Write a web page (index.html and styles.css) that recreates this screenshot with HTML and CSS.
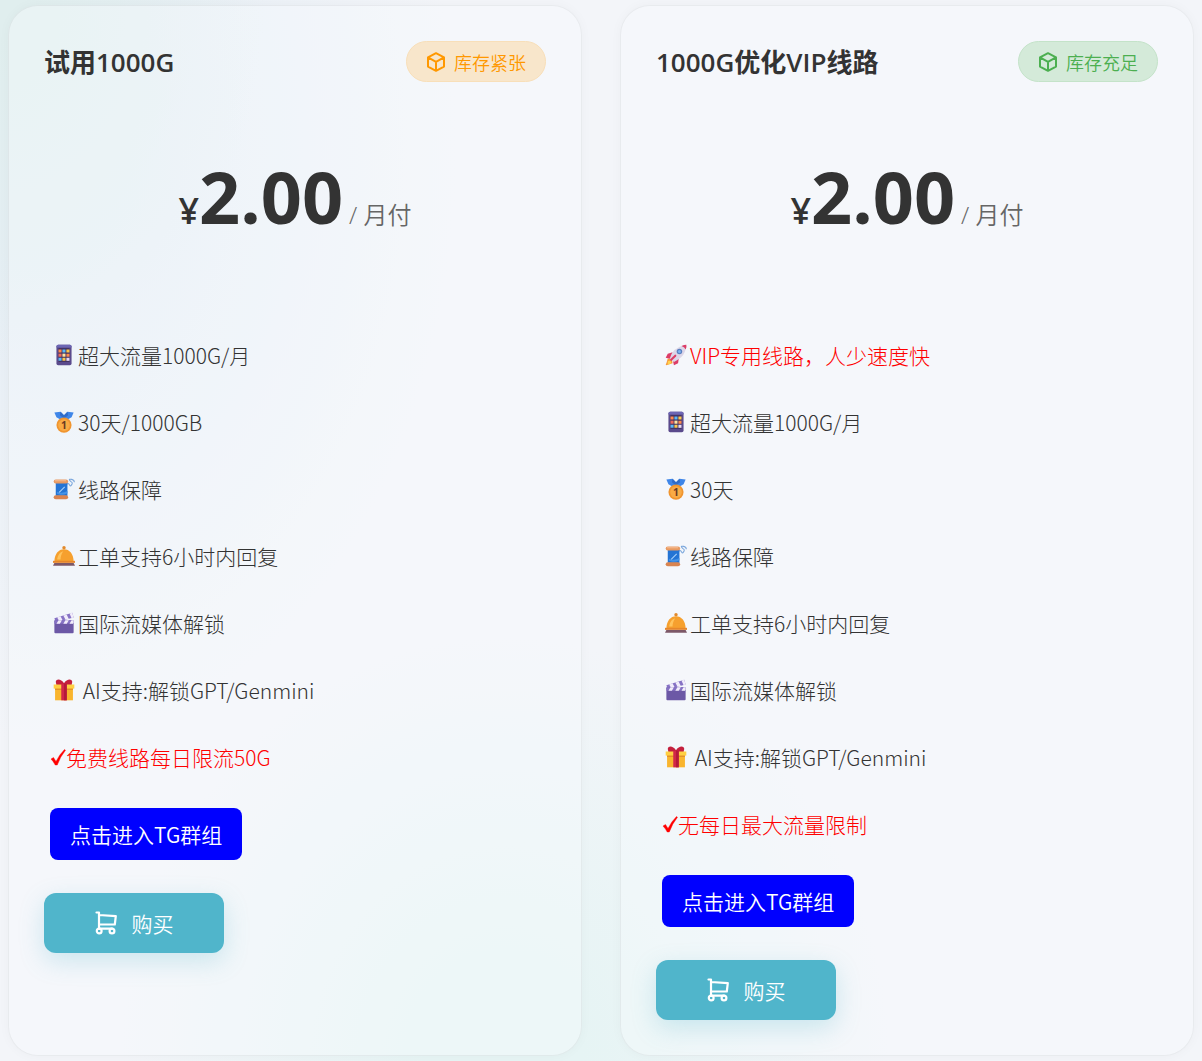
FILE: index.html
```html
<!DOCTYPE html>
<html lang="zh-CN">
<head>
    <meta charset="UTF-8">
    <meta name="viewport" content="width=device-width, initial-scale=1.0">
    <title>套餐购买</title>
    <link rel="stylesheet" href="styles.css">
</head>
<body>

    <!-- Shared icons -->
    <svg class="icon-defs" aria-hidden="true">
        <defs>
            <symbol id="icon-box" viewBox="0 0 20 20">
                <path d="M10 1.2 18 5.4v9.2l-8 4.2-8-4.2V5.4zM2 5.4l8 4.4 8-4.4M10 9.8v9" fill="none" stroke="currentColor" stroke-width="2" stroke-linejoin="round"/>
            </symbol>
            <symbol id="icon-cart" viewBox="0 0 22 24">
                <g fill="none" stroke="currentColor" stroke-width="2.200" stroke-linecap="round" stroke-linejoin="round">
                    <path d="M1.500 1.500h2.500v16.200M4 4l16.800 1.200-1 8.300H4"/>
                    <path d="M4.500 17.700h12.500"/>
                    <circle cx="4.200" cy="20" r="2.400"/>
                    <circle cx="17" cy="20" r="2.400"/>
                </g>
            </symbol>
            <symbol id="icon-phone" viewBox="0 0 32 32">
                <rect x="5" y="1" width="22" height="30" rx="2.500" fill="#5a4a8c"/>
                <path d="M5 5V3.500Q5 1 7.500 1h17Q27 1 27 3.500V5z" fill="#6c66b4"/>
                <rect x="8" y="6" width="16" height="20" fill="#40305f"/>
                <g>
                    <path d="M8 8h4.500v4.500H8zM19.500 14H24v4.500h-4.500z" fill="#ff8a4c"/>
                    <path d="M13.700 8h4.500v4.500h-4.500zM8 20h4.500v4.500H8z" fill="#5bb8f5"/>
                    <path d="M19.500 8H24v4.500h-4.500zM13.700 20h4.500v4.500h-4.500z" fill="#f9c74f"/>
                    <path d="M8 14h4.500v4.500H8z" fill="#f06a5a"/>
                    <path d="M13.700 14h4.500v4.500h-4.500z" fill="#ffe3a0"/>
                    <path d="M19.500 20H24v4.500h-4.500z" fill="#e8d9f2"/>
                </g>
            </symbol>
            <symbol id="icon-medal" viewBox="0 0 32 32">
                <path d="M2 2 11 1l5 5 5-5 9 1-3 7-7 4h-8L5 9z" fill="#3f86e8"/>
                <path d="M11 1l5 5 5-5 1 5-6 5-6-5z" fill="#2f6cc9"/>
                <circle cx="16" cy="20.500" r="11" fill="#f0952f"/>
                <circle cx="16" cy="20.500" r="8.500" fill="#f9ab45"/>
                <text class="medal-number" x="16" y="26" text-anchor="middle">1</text>
            </symbol>
            <symbol id="icon-thread" viewBox="0 0 32 32">
                <path d="M20 9q3-2 4 1t3 0 0-4-3-3 3-1 4 4" fill="none" stroke="#7ba7dc" stroke-width="1.500"/>
                <path d="M4 6h17v20H4z" fill="#2474d4"/>
                <path d="M6 20q7 3 15-1v3q-8 4-15 1z" fill="#4594e8"/>
                <path d="M9 21l8-8" stroke="#a9d2fb" stroke-width="1.500"/>
                <rect x="1" y="2" width="21" height="6" rx="3" fill="#e89a62"/>
                <rect x="1" y="25" width="21" height="6" rx="3" fill="#d98450"/>
                <path d="M3 4h16" stroke="#f7bd90" stroke-width="1.500"/>
            </symbol>
            <symbol id="icon-bell" viewBox="0 0 32 32">
                <circle cx="16" cy="4" r="2.500" fill="#e28a2c"/>
                <path d="M2 24C2 13 8 6 16 6s14 7 14 18z" fill="#f6a02e"/>
                <path d="M6 21c1-6 4-11 9-12-3 4-4 8-4 12z" fill="#ffc35c"/>
                <path d="M0 23h32v3H0z" fill="#e6862b"/>
                <path d="M2 26h28l2 4H0z" fill="#7c5868"/>
            </symbol>
            <symbol id="icon-clapper" viewBox="0 0 32 32">
                <path d="M2 9 28 1l2 7L4 15z" fill="#8672c4"/>
                <path d="M6 8l5-2 3 6-5 1zM15 5l5-1 3 6-5 1zM24 2l4-1 2 7-3 1z" fill="#f2edfb"/>
                <rect x="2" y="12" width="28" height="19" rx="1.500" fill="#6c58a6"/>
                <path d="M2 12h28v5H2z" fill="#8672c4"/>
                <path d="M8 12h5l-3 5H5zM18 12h5l-3 5h-5zM27 12h3v4l-1 1h-5z" fill="#f2edfb"/>
            </symbol>
            <symbol id="icon-gift" viewBox="0 0 32 32">
                <path d="M16 6C12 0 5-1 4 4l1 5h22l1-5c-1-5-8-4-12 2z" fill="#c4203d"/>
                <path d="M3 12h26v19H3z" fill="#f9b52e"/>
                <path d="M1 8h30v6H1z" fill="#ffd043"/>
                <path d="M3 14h26v2H3z" fill="#e3922a"/>
                <path d="M12 7h8v24h-8z" fill="#d22748"/>
                <path d="M16 7h4v24h-4z" fill="#b51a3a"/>
            </symbol>
            <symbol id="icon-rocket" viewBox="0 0 32 32">
                <path d="M4 21l6 1 1 6-9 3q-2-1 0-3z" fill="#f79a3c"/>
                <path d="M4 25l4-1 1 4-5 2z" fill="#ffd34f"/>
                <path d="M11 12 4 14l-3 6 9 2zM20 21l-1 7-6 3-2-9z" fill="#dc3d67"/>
                <path d="M7 21Q11 5 30 1q2 16-17 25z" fill="#dcd6e8"/>
                <path d="M24 3q4-2 7-2 1 4-1 7-1-3-6-5z" fill="#dc3d67"/>
                <circle cx="21" cy="11" r="4" fill="#5a7fc0"/>
                <circle cx="21" cy="11" r="2.200" fill="#7db4ef"/>
                <path d="M9 23l6-6" stroke="#dc3d67" stroke-width="3" stroke-linecap="round"/>
            </symbol>
            <symbol id="icon-check" viewBox="0 0 16 20">
                <path d="M1 12l2.500-1.500L6 14.500Q9 8 14.500 2.500l1 .7Q10 10 7.300 18H5.200Q3.500 14.500 1 12z" fill="currentColor" stroke="currentColor" stroke-width=".4"/>
            </symbol>
        </defs>
    </svg>

    <main class="plans">
        <section class="card">
            <div class="card-header">
                <h2>试用1000G</h2>
                <span class="badge badge-low"><svg class="badge-icon"><use href="#icon-box"/></svg>库存紧张</span>
            </div>
            <div class="price">
                <span class="currency">¥</span><strong>2.00</strong><span class="period">/ 月付</span>
            </div>
            <ul class="features">
                <li><svg class="emoji"><use href="#icon-phone"/></svg>超大流量1000G/月</li>
                <li><svg class="emoji"><use href="#icon-medal"/></svg>30天/1000GB</li>
                <li><svg class="emoji"><use href="#icon-thread"/></svg>线路保障</li>
                <li><svg class="emoji"><use href="#icon-bell"/></svg>工单支持6小时内回复</li>
                <li><svg class="emoji"><use href="#icon-clapper"/></svg>国际流媒体解锁</li>
                <li><svg class="emoji"><use href="#icon-gift"/></svg>&nbsp;AI支持:解锁GPT/Genmini</li>
                <li class="highlight"><svg class="check"><use href="#icon-check"/></svg>免费线路每日限流50G</li>
            </ul>
            <a class="tg-link" href="#">点击进入TG群组</a>
            <button class="buy-btn" type="button"><svg class="cart"><use href="#icon-cart"/></svg>购买</button>
        </section>

        <section class="card">
            <div class="card-header">
                <h2>1000G优化VIP线路</h2>
                <span class="badge badge-ok"><svg class="badge-icon"><use href="#icon-box"/></svg>库存充足</span>
            </div>
            <div class="price">
                <span class="currency">¥</span><strong>2.00</strong><span class="period">/ 月付</span>
            </div>
            <ul class="features">
                <li class="highlight"><svg class="emoji"><use href="#icon-rocket"/></svg>VIP专用线路，人少速度快</li>
                <li><svg class="emoji"><use href="#icon-phone"/></svg>超大流量1000G/月</li>
                <li><svg class="emoji"><use href="#icon-medal"/></svg>30天</li>
                <li><svg class="emoji"><use href="#icon-thread"/></svg>线路保障</li>
                <li><svg class="emoji"><use href="#icon-bell"/></svg>工单支持6小时内回复</li>
                <li><svg class="emoji"><use href="#icon-clapper"/></svg>国际流媒体解锁</li>
                <li><svg class="emoji"><use href="#icon-gift"/></svg>&nbsp;AI支持:解锁GPT/Genmini</li>
                <li class="highlight"><svg class="check"><use href="#icon-check"/></svg>无每日最大流量限制</li>
            </ul>
            <a class="tg-link" href="#">点击进入TG群组</a>
            <button class="buy-btn" type="button"><svg class="cart"><use href="#icon-cart"/></svg>购买</button>
        </section>
    </main>

</body>
</html>
```

FILE: styles.css
```css
* {
    box-sizing: border-box;
}

body {
    margin: 0;
    min-height: 100vh;
    font-family: "Noto Sans CJK SC", sans-serif;
    font-weight: 350;
    color: #333;
    background-color: #f3f5f9;
    background-image:
        radial-gradient(ellipse 32% 40% at 42% 100%, #e6f4f4 20%, rgba(230, 244, 244, 0) 100%),
        radial-gradient(ellipse 22% 34% at 0% 0%, #e0eeee 10%, rgba(224, 238, 238, 0) 100%),
        radial-gradient(ellipse 34% 56% at 4% 14%, #e6eef5 20%, rgba(230, 238, 245, 0) 100%);
}

.icon-defs {
    position: absolute;
    width: 0;
    height: 0;
}

.plans {
    display: grid;
    grid-template-columns: 1fr 1fr;
    gap: 38px;
    padding: 5px 8px;
}

.card {
    display: flex;
    flex-direction: column;
    align-items: flex-start;
    padding: 35px;
    border: 1px solid rgba(0, 0, 0, 0.05);
    border-radius: 30px;
    background-color: rgba(248, 251, 255, 0.35);
    box-shadow: 0 0 12px rgba(0, 0, 0, 0.03);
}

.card-header {
    display: flex;
    align-items: center;
    justify-content: space-between;
    width: 100%;
}

h2 {
    margin: 0;
    font-family: "Open Sans", "Noto Sans CJK SC", sans-serif;
    font-size: 26px;
    font-weight: 600;
    line-height: 36px;
}

.badge {
    display: flex;
    align-items: center;
    gap: 8px;
    height: 41px;
    padding: 0 19px;
    border: 1px solid;
    border-radius: 21px;
    font-size: 18px;
}

.badge-icon {
    width: 20px;
    height: 20px;
}

.badge-low {
    color: #ff9800;
    background-color: #f8e6cb;
    border-color: #f8dfb9;
}

.badge-ok {
    color: #4caf50;
    background-color: #d4ead9;
    border-color: #c4e3c9;
}

.price {
    align-self: center;
    display: flex;
    align-items: baseline;
    margin: 66px 0 58px;
    font-family: "Open Sans", "Noto Sans CJK SC", sans-serif;
    line-height: 96px;
}

.currency {
    font-size: 36px;
    font-weight: 600;
}

.price strong {
    font-size: 72px;
    font-weight: 700;
}

.period {
    margin-left: 6px;
    font-size: 24px;
    color: #666;
}

.features {
    margin: 0;
    padding: 0 6px;
    list-style: none;
    font-size: 21px;
    font-weight: 300;
}

.features li {
    display: flex;
    align-items: center;
    height: 67px;
}

.features .highlight {
    color: #f00;
}

.emoji {
    width: 22px;
    height: 22px;
    margin: 0 3px;
}

.check {
    width: 16px;
    height: 20px;
}

.medal-number {
    font-family: "Open Sans", sans-serif;
    font-size: 15px;
    font-weight: 700;
    fill: #6b3a22;
}

.tg-link {
    margin: 18px 6px 33px;
    padding: 0 20px;
    border-radius: 8px;
    background-color: #00f;
    color: white;
    font-size: 21px;
    line-height: 52px;
    text-decoration: none;
}

.buy-btn {
    display: flex;
    align-items: center;
    justify-content: center;
    gap: 15px;
    width: 180px;
    height: 60px;
    border: none;
    border-radius: 12px;
    background-color: #50b5cb;
    color: white;
    font: inherit;
    font-size: 21px;
    cursor: pointer;
    box-shadow: 0 8px 24px rgba(80, 181, 203, 0.25);
}

.buy-btn:hover {
    background-color: #429fb4;
}

.cart {
    width: 22px;
    height: 24px;
}
```
